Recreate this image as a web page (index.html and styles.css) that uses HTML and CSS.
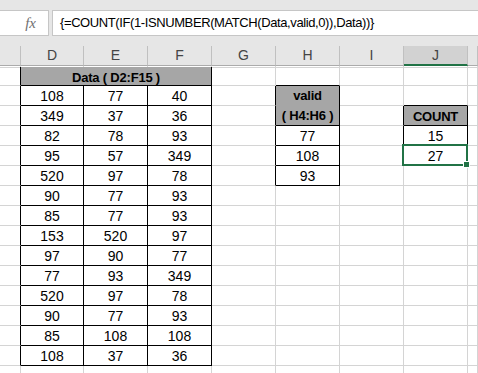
FILE: index.html
```html
<!DOCTYPE html>
<html lang="en">
<head>
    <meta charset="UTF-8">
    <title>COUNT values not in list</title>
    <link rel="stylesheet" href="styles.css">
</head>
<body>

<div class="formula-bar">
    <div class="fx-box"><span class="fx">fx</span></div>
    <div class="formula">{=COUNT(IF(1-ISNUMBER(MATCH(Data,valid,0)),Data))}</div>
</div>

<div class="col-heads">
    <div class="ch"></div>
    <div class="ch">D</div>
    <div class="ch">E</div>
    <div class="ch">F</div>
    <div class="ch">G</div>
    <div class="ch">H</div>
    <div class="ch">I</div>
    <div class="ch active">J</div>
    <div class="ch"></div>
</div>

<div class="sheet" id="sheet"></div>

<script>
    var colD = [108, 349, 82, 95, 520, 90, 85, 153, 97, 77, 520, 90, 85, 108];
    var colE = [77, 37, 78, 57, 97, 77, 77, 520, 90, 93, 97, 77, 108, 37];
    var colF = [40, 36, 93, 349, 78, 93, 93, 97, 77, 349, 78, 93, 108, 36];

    // text and merges, keyed by "row,col"
    var cells = {
        '2,1': { text: 'Data ( D2:F15 )', cls: 'head', span: 3 },
        '3,5': { text: 'valid<br>( H4:H6 )', cls: 'head two', rows: 2 },
        '5,5': { text: '77' },
        '6,5': { text: '108' },
        '7,5': { text: '93' },
        '4,7': { text: 'COUNT', cls: 'head' },
        '5,7': { text: '15' },
        '6,7': { text: '27', cls: 'selected' }
    };
    for (var i = 0; i < colD.length; i++) {
        cells[(i + 3) + ',1'] = { text: colD[i] };
        cells[(i + 3) + ',2'] = { text: colE[i] };
        cells[(i + 3) + ',3'] = { text: colF[i] };
    }

    // bordered blocks: [firstRow, lastRow, firstCol, lastCol]
    var boxes = [[2, 16, 1, 3], [3, 7, 5, 5], [4, 6, 7, 7]];
    var skip = { '2,2': 1, '2,3': 1, '4,5': 1 };

    var sheet = document.getElementById('sheet');
    for (var r = 1; r <= 17; r++) {
        for (var c = 0; c <= 8; c++) {
            var key = r + ',' + c;
            if (skip[key]) continue;
            var el = document.createElement('div');
            el.className = 'cell';
            var info = cells[key];
            if (info) {
                el.innerHTML = info.text;
                if (info.cls) el.className += ' ' + info.cls;
                if (info.span) el.style.gridColumn = 'span ' + info.span;
                if (info.rows) el.style.gridRow = 'span ' + info.rows;
            }
            boxes.forEach(function (b) {
                var inRows = r >= b[0] && r <= b[1];
                var inCols = c >= b[2] && c <= b[3];
                if (inRows && inCols) el.className += ' bb br';
                if (r === b[0] - 1 && inCols) el.className += ' bb';
                if (c === b[2] - 1 && inRows) el.className += ' br';
            });
            sheet.appendChild(el);
        }
    }
</script>

</body>
</html>
```

FILE: styles.css
```css
body {
    margin: 0;
    width: 478px;
    height: 373px;
    overflow: hidden;
    background-color: #fff;
    font-family: "Liberation Sans", Arial, sans-serif;
    font-size: 14px;
    color: #000;
}

.formula-bar {
    display: flex;
    gap: 3px;
    height: 46px;
    padding-top: 10px;
    box-sizing: border-box;
    background-color: #e6e6e6;
}

.fx-box, .formula {
    height: 26px;
    box-sizing: border-box;
    background-color: #fff;
    border: 1px solid #c6c6c6;
}

.fx-box {
    width: 49px;
    border-left: none;
    display: flex;
    align-items: center;
    justify-content: flex-end;
    padding-right: 12px;
}

.fx {
    font-family: "Liberation Serif", serif;
    font-style: italic;
    font-size: 15px;
    color: #707070;
}

.formula {
    flex: 1;
    border-right: none;
    padding-left: 7px;
    line-height: 24px;
    font-size: 13px;
    letter-spacing: -0.4px;
    color: #000;
}

.col-heads, .sheet {
    display: grid;
    grid-template-columns: 21px 63px 64px 64px 64px 64px 64px 64px 10px;
}

.col-heads {
    background-color: #e6e6e6;
    height: 20px;
}

.ch {
    box-sizing: border-box;
    border-right: 1px solid #c0c0c0;
    border-bottom: 1px solid #ababab;
    text-align: center;
    line-height: 19px;
    color: #444;
}

.ch.active {
    background-color: #d2d2d2;
    border-bottom: 2px solid #217346;
    line-height: 18px;
}

.sheet {
    grid-template-rows: 1px 19px;
    grid-auto-rows: 20px;
}

.cell {
    box-sizing: border-box;
    border-right: 1px solid #d4d4d4;
    border-bottom: 1px solid #d4d4d4;
    text-align: center;
    line-height: 19px;
    padding-top: 1px;
    position: relative;
}

.cell.bb {
    border-bottom-color: #000;
}

.cell.br {
    border-right-color: #000;
}

.head {
    background-color: #a6a6a6;
    font-weight: bold;
    font-size: 13px;
    letter-spacing: -0.2px;
}

.head.two {
    line-height: 20px;
    padding-top: 0;
}

.selected::after {
    content: "";
    position: absolute;
    left: -2px;
    top: -2px;
    right: -1px;
    bottom: -1px;
    border: 2px solid #217346;
}

.selected::before {
    content: "";
    position: absolute;
    right: -3px;
    bottom: -3px;
    width: 5px;
    height: 5px;
    background-color: #217346;
    border: 1px solid #fff;
    z-index: 1;
}
```
